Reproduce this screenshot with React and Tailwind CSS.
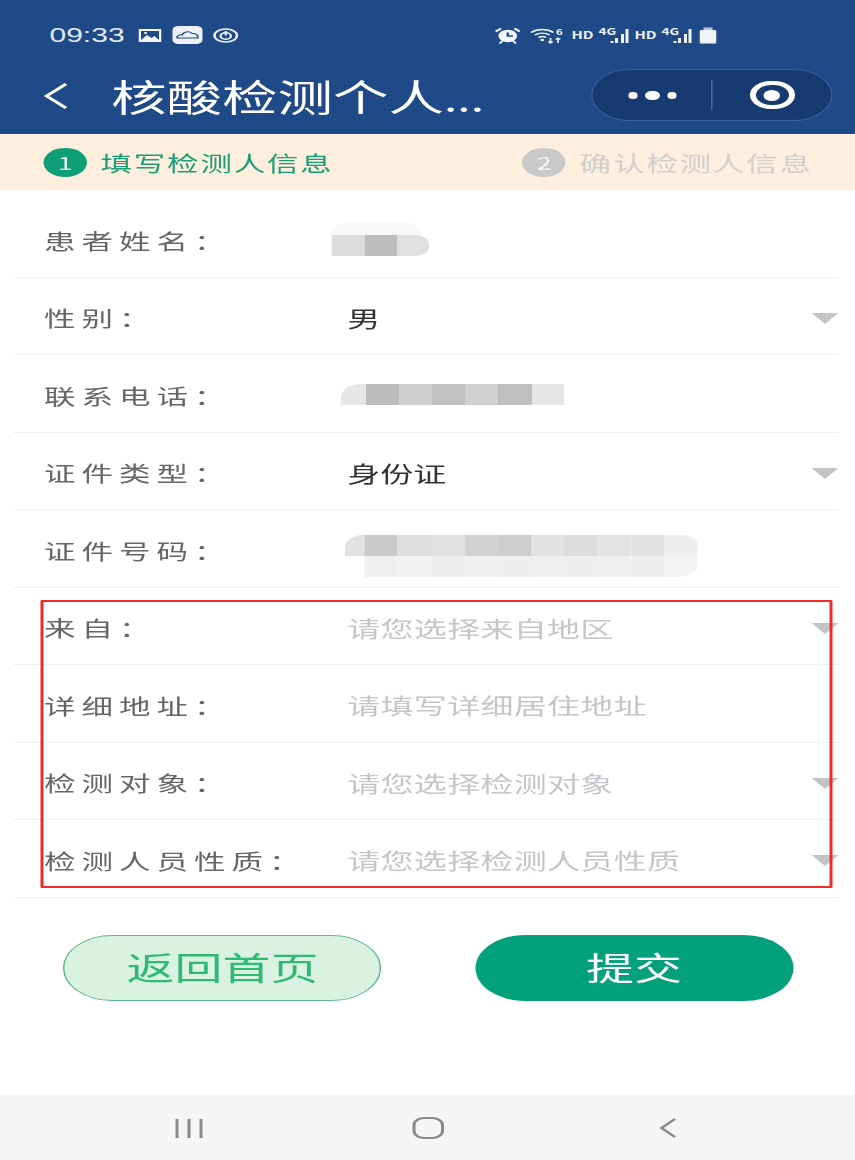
import React from "react";

const font = { fontFamily: '"Noto Sans CJK SC", "Noto Sans", sans-serif' };

const rows = [
  { label: "患者姓名：", blur: "name" },
  { label: "性别：", value: "男", arrow: true },
  { label: "联系电话：", blur: "phone" },
  { label: "证件类型：", value: "身份证", arrow: true },
  { label: "证件号码：", blur: "id" },
  { label: "来自：", hint: "请您选择来自地区", arrow: true },
  { label: "详细地址：", hint: "请填写详细居住地址" },
  { label: "检测对象：", hint: "请您选择检测对象", arrow: true },
  { label: "检测人员性质：", hint: "请您选择检测人员性质", arrow: true },
];

const Cells = ({ colors, first = 22, className = "" }) => (
  <div className={`flex h-[21px] overflow-hidden ${className}`}>
    {colors.map((c, i) => (
      <div
        key={i}
        className="h-full shrink-0"
        style={{ backgroundColor: c, width: i === 0 ? first : 22.2 }}
      />
    ))}
  </div>
);

const Blur = ({ type }) => {
  if (type === "name") {
    return (
      <div className="ml-[-10.5px] mt-[-6px] w-[65px]">
        <div className="h-[13px] w-[60px] rounded-t-[16px] bg-[#f8f8f8]" />
        <Cells colors={["#dcdcdc", "#bdbdbd", "#e0e0e0"]} className="rounded-r-[9px]" />
      </div>
    );
  }
  if (type === "phone") {
    return (
      <div className="ml-[-4.5px] mt-[-5px] w-[149px]">
        <Cells
          first={16.7}
          colors={["#e6e6e6", "#bcbcbc", "#cfcfcf", "#c2c2c2", "#d0d0d0", "#bfbfbf", "#e6e6e6"]}
          className="rounded-tl-[14px]"
        />
      </div>
    );
  }
  return (
    <div className="ml-[-1.5px] mt-[7px] w-[236px]">
      <Cells
        first={13.3}
        colors={["#e2e2e2", "#cacaca", "#dedede", "#e0e0e0", "#d2d2d2", "#cecece", "#e2e2e2", "#dcdcdc", "#e3e3e3", "#e1e1e1", "#eeeeee"]}
        className="rounded-t-[12px]"
      />
      <Cells
        first={13.3}
        colors={["#ffffff", "#efefef", "#f1f1f1", "#eeeeee", "#efefef", "#eeeeee", "#efefef", "#eeeeee", "#efefef", "#eeeeee", "#f4f4f4"]}
        className="rounded-b-[14px]"
      />
    </div>
  );
};

const Arrow = () => (
  <svg width="18" height="11" viewBox="0 0 18 11" className="absolute right-0 top-[35px]">
    <path d="M0 0H18L9 11Z" fill="#c4c4c6" />
  </svg>
);

const Signal = ({ className }) => (
  <div className={`relative h-[17px] w-[20px] ${className}`}>
    <span className="absolute left-0 top-0 text-[9px] font-bold leading-[9px] text-[#eef2f7]">4G</span>
    <div className="absolute bottom-[1px] right-0 flex items-end gap-[1.5px]">
      <div className="h-[2px] w-[2px] bg-[#eef2f7]" />
      <div className="h-[5px] w-[2px] bg-[#eef2f7]" />
      <div className="h-[9px] w-[2px] bg-[#eef2f7]" />
      <div className="h-[14px] w-[2px] bg-[#eef2f7]" />
    </div>
  </div>
);

const StatusIcons = () => (
  <div className="flex items-center">
    {/* alarm */}
    <svg width="17" height="17" viewBox="0 0 17 17">
      <circle cx="8.5" cy="9" r="6.2" fill="#f2f5f9" />
      <path d="M8.5 5.5V9H12" stroke="#1f4a87" strokeWidth="1.6" fill="none" />
      <path d="M0.5 4.5L4 1.5M16.5 4.5L13 1.5" stroke="#f2f5f9" strokeWidth="1.8" />
      <path d="M3 16.5L5 14M14 16.5L12 14" stroke="#f2f5f9" strokeWidth="1.5" />
    </svg>
    {/* wifi */}
    <svg width="24" height="17" viewBox="0 0 24 17" className="ml-[6px]">
      <path d="M1 5.5C5.5 1.5 11.5 1.5 16 5.5M3.5 8C6.5 5.5 10.5 5.5 13.5 8M6 10.5C7.5 9.3 9.5 9.3 11 10.5" stroke="#eef2f7" strokeWidth="1.4" fill="none" />
      <circle cx="8.5" cy="13" r="1.2" fill="#eef2f7" />
      <path d="M14 11V16M12.5 14.5L14 16L15.5 14.5M19 16V11M17.5 12.5L19 11L20.5 12.5" stroke="#eef2f7" strokeWidth="1.1" fill="none" />
      <text x="17.5" y="8" fontSize="8" fontWeight="700" fill="#eef2f7">6</text>
    </svg>
    <span className="ml-[4px] w-[14px] text-[10px] font-bold leading-none text-[#eef2f7]">HD</span>
    <Signal className="ml-[4px]" />
    <span className="ml-[4px] w-[14px] text-[10px] font-bold leading-none text-[#eef2f7]">HD</span>
    <Signal className="ml-[4px]" />
    {/* battery */}
    <svg width="12" height="17" viewBox="0 0 12 17" className="ml-[5px]">
      <rect x="3" y="0.5" width="6" height="2.5" fill="#b9c7da" />
      <rect x="0.5" y="3" width="11" height="13.5" rx="1" fill="#f2f5f9" />
    </svg>
  </div>
);

export default function App() {
  return (
    <div className="h-[1160px] w-[855px] overflow-hidden bg-white" style={font}>
      {/* the screenshot is stretched sideways, so everything is laid out at 570 wide */}
      <div className="relative flex h-[1160px] w-[570px] origin-top-left scale-x-150 flex-col">
        {/* Header */}
        <header className="h-[134px] shrink-0 bg-[#1f4a87]">
          <div className="flex h-[68px] items-center justify-between pl-[33px] pr-[92px] pt-[2px]">
            <div className="flex items-center">
              <span className="text-[20px] leading-none text-[#e2eaf3]" style={{ fontFamily: '"Liberation Sans", sans-serif' }}>
                09:33
              </span>
              <svg width="16" height="15" viewBox="0 0 16 15" className="ml-[9px]">
                <rect x="0.5" y="1" width="15" height="13" fill="#f2f5f9" />
                <rect x="2" y="3" width="12" height="9" fill="#1f4a87" />
                <path d="M2 12L6 7L9 10L11 8L14 12Z" fill="#f2f5f9" />
                <circle cx="5" cy="5" r="1.1" fill="#f2f5f9" />
              </svg>
              <div className="ml-[7px] flex h-[18px] w-[20px] items-center justify-center rounded-[4px] bg-[#edf1f6]">
                <svg width="16" height="10" viewBox="0 0 16 10">
                  <path d="M1 8C0.5 5.5 3 4.5 4.5 5C5 2 9 0.5 11 3.5C13.5 3 15.5 5.5 15 8ZM1 8H15" stroke="#1f4a87" strokeWidth="1" fill="none" />
                </svg>
              </div>
              <svg width="17" height="15" viewBox="0 0 17 15" className="ml-[7px]">
                <ellipse cx="8.5" cy="7.5" rx="7.5" ry="6.5" stroke="#eef2f7" strokeWidth="1.6" fill="none" />
                <ellipse cx="8.5" cy="8" rx="3.5" ry="3.2" stroke="#eef2f7" strokeWidth="1.5" fill="none" />
                <path d="M8.5 3V7.5" stroke="#eef2f7" strokeWidth="1.4" />
              </svg>
            </div>
            <StatusIcons />
          </div>
          <div className="flex h-[66px] items-start">
            <svg width="16" height="28" viewBox="0 0 16 28" className="ml-[29px] mt-[14px] shrink-0">
              <path d="M15 2L2 14L15 26" stroke="#ffffff" strokeWidth="2.4" fill="none" />
            </svg>
            <h1 className="ml-[29px] whitespace-nowrap text-[37px] font-normal leading-[56px] text-white">
              核酸检测个人<span className="text-[32px]">...</span>
            </h1>
            <div className="ml-auto mr-[15px] mt-[1px] flex h-[52px] w-[161px] shrink-0 items-center rounded-full border border-[#3a5f96] bg-[#173a70]">
              <div className="flex flex-1 items-center justify-center gap-[5px]">
                <div className="h-[7px] w-[6px] rounded-full bg-white" />
                <div className="h-[9px] w-[10px] rounded-full bg-white" />
                <div className="h-[7px] w-[6px] rounded-full bg-white" />
              </div>
              <div className="h-[30px] w-px bg-[#4a6b9d]" />
              <div className="flex flex-1 items-center justify-center">
                <div className="flex h-[28px] w-[30px] items-center justify-center rounded-full border-[4px] border-white">
                  <div className="h-[11px] w-[11px] rounded-full bg-white" />
                </div>
              </div>
            </div>
          </div>
        </header>

        {/* Steps */}
        <div className="flex h-[56px] shrink-0 items-center bg-[#fdeedd] pl-[29px] text-[21px] tracking-[1.2px]">
          <div className="flex h-[29px] w-[29px] items-center justify-center rounded-full bg-[#0f9f77] text-[18px] tracking-normal text-[#e8f5ef]">
            1
          </div>
          <span className="ml-[9px] mt-[1px] text-[#1a9f78]">填写检测人信息</span>
          <div className="ml-[126px] flex h-[29px] w-[29px] items-center justify-center rounded-full bg-[#c9c9c9] text-[18px] tracking-normal text-[#f4f4f4]">
            2
          </div>
          <span className="ml-[9px] mt-[1px] whitespace-nowrap text-[#d0cfcc]">确认检测人信息</span>
        </div>

        {/* Form */}
        <div className="pl-[9.3px] pr-[11.3px] pt-[10px]">
          {rows.map((row) => (
            <div key={row.label} className="relative flex h-[77.5px] items-center border-b border-[#eeeeee] pt-2">
              <div className="mb-[4px] w-[222.2px] shrink-0 whitespace-nowrap pl-[20px] text-[21px] tracking-[4px] text-[#666666]">
                {row.label}
              </div>
              {row.value && <div className="mb-[4px] text-[22px] text-[#333333]">{row.value}</div>}
              {row.hint && <div className="mb-[5px] whitespace-nowrap text-[22px] tracking-[0.2px] text-[#c3c7c9]">{row.hint}</div>}
              {row.blur && <Blur type={row.blur} />}
              {row.arrow && <Arrow />}
            </div>
          ))}
        </div>

        {/* Buttons */}
        <div className="mt-[37px] flex justify-between pl-[42.3px] pr-[41.3px]">
          <button className="h-[66px] w-[212px] rounded-full border border-[#5cb98f] bg-[#daf2e2] pb-[4px] text-[32px] text-[#2fba74]">
            返回首页
          </button>
          <button className="h-[66px] w-[212px] rounded-full bg-[#03a07c] pb-[4px] text-[32px] text-white">
            提交
          </button>
        </div>

        {/* Android nav */}
        <div className="mt-auto flex h-[65px] shrink-0 items-center bg-[#f5f5f5] pt-[1px]">
          <div className="ml-[117px] flex gap-[6px]">
            <div className="h-[19px] w-[2px] bg-[#8a8a8a]" />
            <div className="h-[19px] w-[2px] bg-[#8a8a8a]" />
            <div className="h-[19px] w-[2px] bg-[#8a8a8a]" />
          </div>
          <div className="ml-[140px] h-[22px] w-[21px] rounded-[8px] border-[2.5px] border-[#8a8a8a]" />
          <svg width="12" height="22" viewBox="0 0 12 22" className="ml-[143px]">
            <path d="M11 2L2 11L11 20" stroke="#8a8a8a" strokeWidth="2" fill="none" />
          </svg>
        </div>

        {/* Red annotation box */}
        <div className="absolute left-[26.6px] top-[600px] h-[288px] w-[528px] rounded-[1px] border-2 border-[#f02a2a]" />
      </div>
    </div>
  );
}
